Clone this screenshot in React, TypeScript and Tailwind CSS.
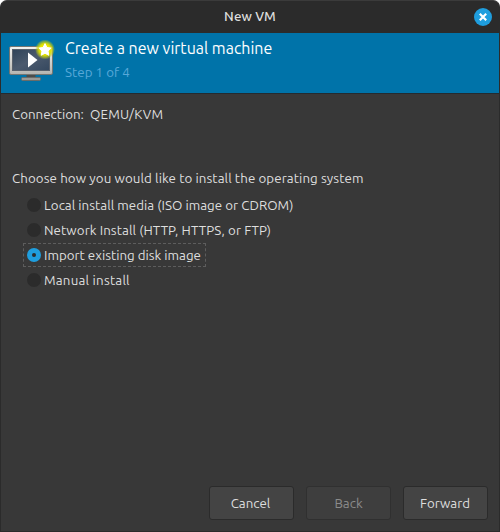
const options = [
  { label: 'Local install media (ISO image or CDROM)', spacing: 'tracking-[0.03px]' },
  { label: 'Network Install (HTTP, HTTPS, or FTP)', spacing: 'tracking-[0.075px]' },
  { label: 'Import existing disk image', spacing: 'tracking-normal', selected: true },
  { label: 'Manual install', spacing: 'tracking-[0.22px]' },
];

function MachineIcon() {
  return (
    <svg width="48" height="46" viewBox="0 0 48 46" className="-mr-[2px] shrink-0">
      <defs>
        <linearGradient id="frame" x1="0" y1="0" x2="0" y2="1">
          <stop offset="0" stopColor="#f4f4f2" />
          <stop offset="1" stopColor="#b4b4b0" />
        </linearGradient>
        <linearGradient id="screen" x1="0" y1="0" x2="1" y2="1">
          <stop offset="0" stopColor="#2f4359" />
          <stop offset="0.5" stopColor="#4b5a6e" />
          <stop offset="1" stopColor="#35485f" />
        </linearGradient>
        <radialGradient id="glow">
          <stop offset="0.4" stopColor="#f0ec00" />
          <stop offset="0.6" stopColor="#dfe000" stopOpacity="0.95" />
          <stop offset="0.8" stopColor="#c3cf10" stopOpacity="0.6" />
          <stop offset="1" stopColor="#b5d020" stopOpacity="0" />
        </radialGradient>
      </defs>
      <path d="M17.5 35h9v4h-9z" fill="#4b4d4c" />
      <rect x="12.5" y="38.5" width="19" height="3" rx="1" fill="#999a97" stroke="#6a6c69" />
      <rect x="0.5" y="7.5" width="43" height="28" rx="1.5" fill="url(#frame)" stroke="#747672" />
      <rect x="3.5" y="10.5" width="37" height="21" fill="url(#screen)" stroke="#59616c" />
      <path d="M19 13.5v15l9.5-7.5z" fill="#fff" />
      <circle cx="36" cy="10.5" r="10" fill="url(#glow)" />
      <path
        d="M36 4.6l1.9 3.9 4.2.6-3.1 2.9.8 4.3-3.8-2.1-3.8 2.1.8-4.3-3.1-2.9 4.2-.6z"
        fill="#fff"
        stroke="#fff"
        strokeWidth="1"
        strokeLinejoin="round"
      />
    </svg>
  );
}

export default function App() {
  return (
    <div className="h-[532px] w-[500px] bg-white">
      <main className="flex h-full flex-col overflow-hidden rounded-t-[7px] border border-[#2b2b2b] border-t-[#3b3b3b] bg-[#383838] font-['Ubuntu','Noto_Sans',sans-serif] text-[13.333px] leading-[20px] text-[#dedede]">
        <header className="grid h-8 shrink-0 grid-cols-[1fr_auto_1fr] items-center bg-[#2b2b2b] pr-[7px]">
          <span />
          <h1 className="pl-[7px] font-medium tracking-[0.1px]">New VM</h1>
          <button className="justify-self-end" aria-label="Close">
            <svg width="18" height="18" viewBox="0 0 18 18" className="block">
              <circle cx="9" cy="9" r="9" fill="#1f9ede" />
              <path d="M5.8 5.8l6.4 6.4M12.2 5.8l-6.4 6.4" stroke="#fff" strokeWidth="2.2" />
            </svg>
          </button>
        </header>
        <section className="flex h-[61px] shrink-0 border-b border-[#242b30] bg-[#0073a9] pl-2 pt-[6px]">
          <MachineIcon />
          <div className="pl-[10px] pt-px">
            <h2 className="w-max text-[16px] leading-[16px] text-white">Create a new virtual machine</h2>
            <p className="w-max pt-[7px] tracking-[0.04px] text-[#58a8d8]">Step 1 of 4</p>
          </div>
        </section>
        <section className="flex flex-1 flex-col px-[11px] pt-[11px]">
          <div className="flex gap-[6px]">
            <span>Connection:</span>
            <span className="tracking-[0.25px]">QEMU/KVM</span>
          </div>
          <p className="w-max pt-[44px] tracking-[0.085px]">Choose how you would like to install the operating system</p>
          <div className="flex flex-col items-start gap-px pl-[11px] pt-1">
            {options.map((o) => (
              <label
                key={o.label}
                className={`flex h-[24px] items-center gap-[3px] border border-dashed pl-[3px] pr-[4px] ${o.selected ? 'border-[#5d5d5d]' : 'border-transparent'}`}
              >
                <span className={`flex size-[14px] items-center justify-center rounded-full ${o.selected ? 'bg-[#1f9ede]' : 'bg-[#2b2b2b]'}`}>
                  {o.selected && <span className="size-[4px] rounded-full bg-[#2b2b2b]" />}
                </span>
                <span className={`whitespace-nowrap pt-[2px] ${o.spacing}`}>{o.label}</span>
              </label>
            ))}
          </div>
          <footer className="mt-auto flex justify-end gap-3 pb-[11px]">
            <button className="h-[34px] w-[85px] rounded-[3px] border border-[#2b2b2b] bg-[#444444] pr-[2px] pt-[2px]">Cancel</button>
            <button className="h-[34px] w-[85px] rounded-[3px] border border-[#303030] bg-[#3e3e3e] pt-[2px] text-[#8b8b8b]" disabled>Back</button>
            <button className="h-[34px] w-[85px] rounded-[3px] border border-[#2b2b2b] bg-[#444444] pr-px pt-[2px]">Forward</button>
          </footer>
        </section>
      </main>
    </div>
  );
}
